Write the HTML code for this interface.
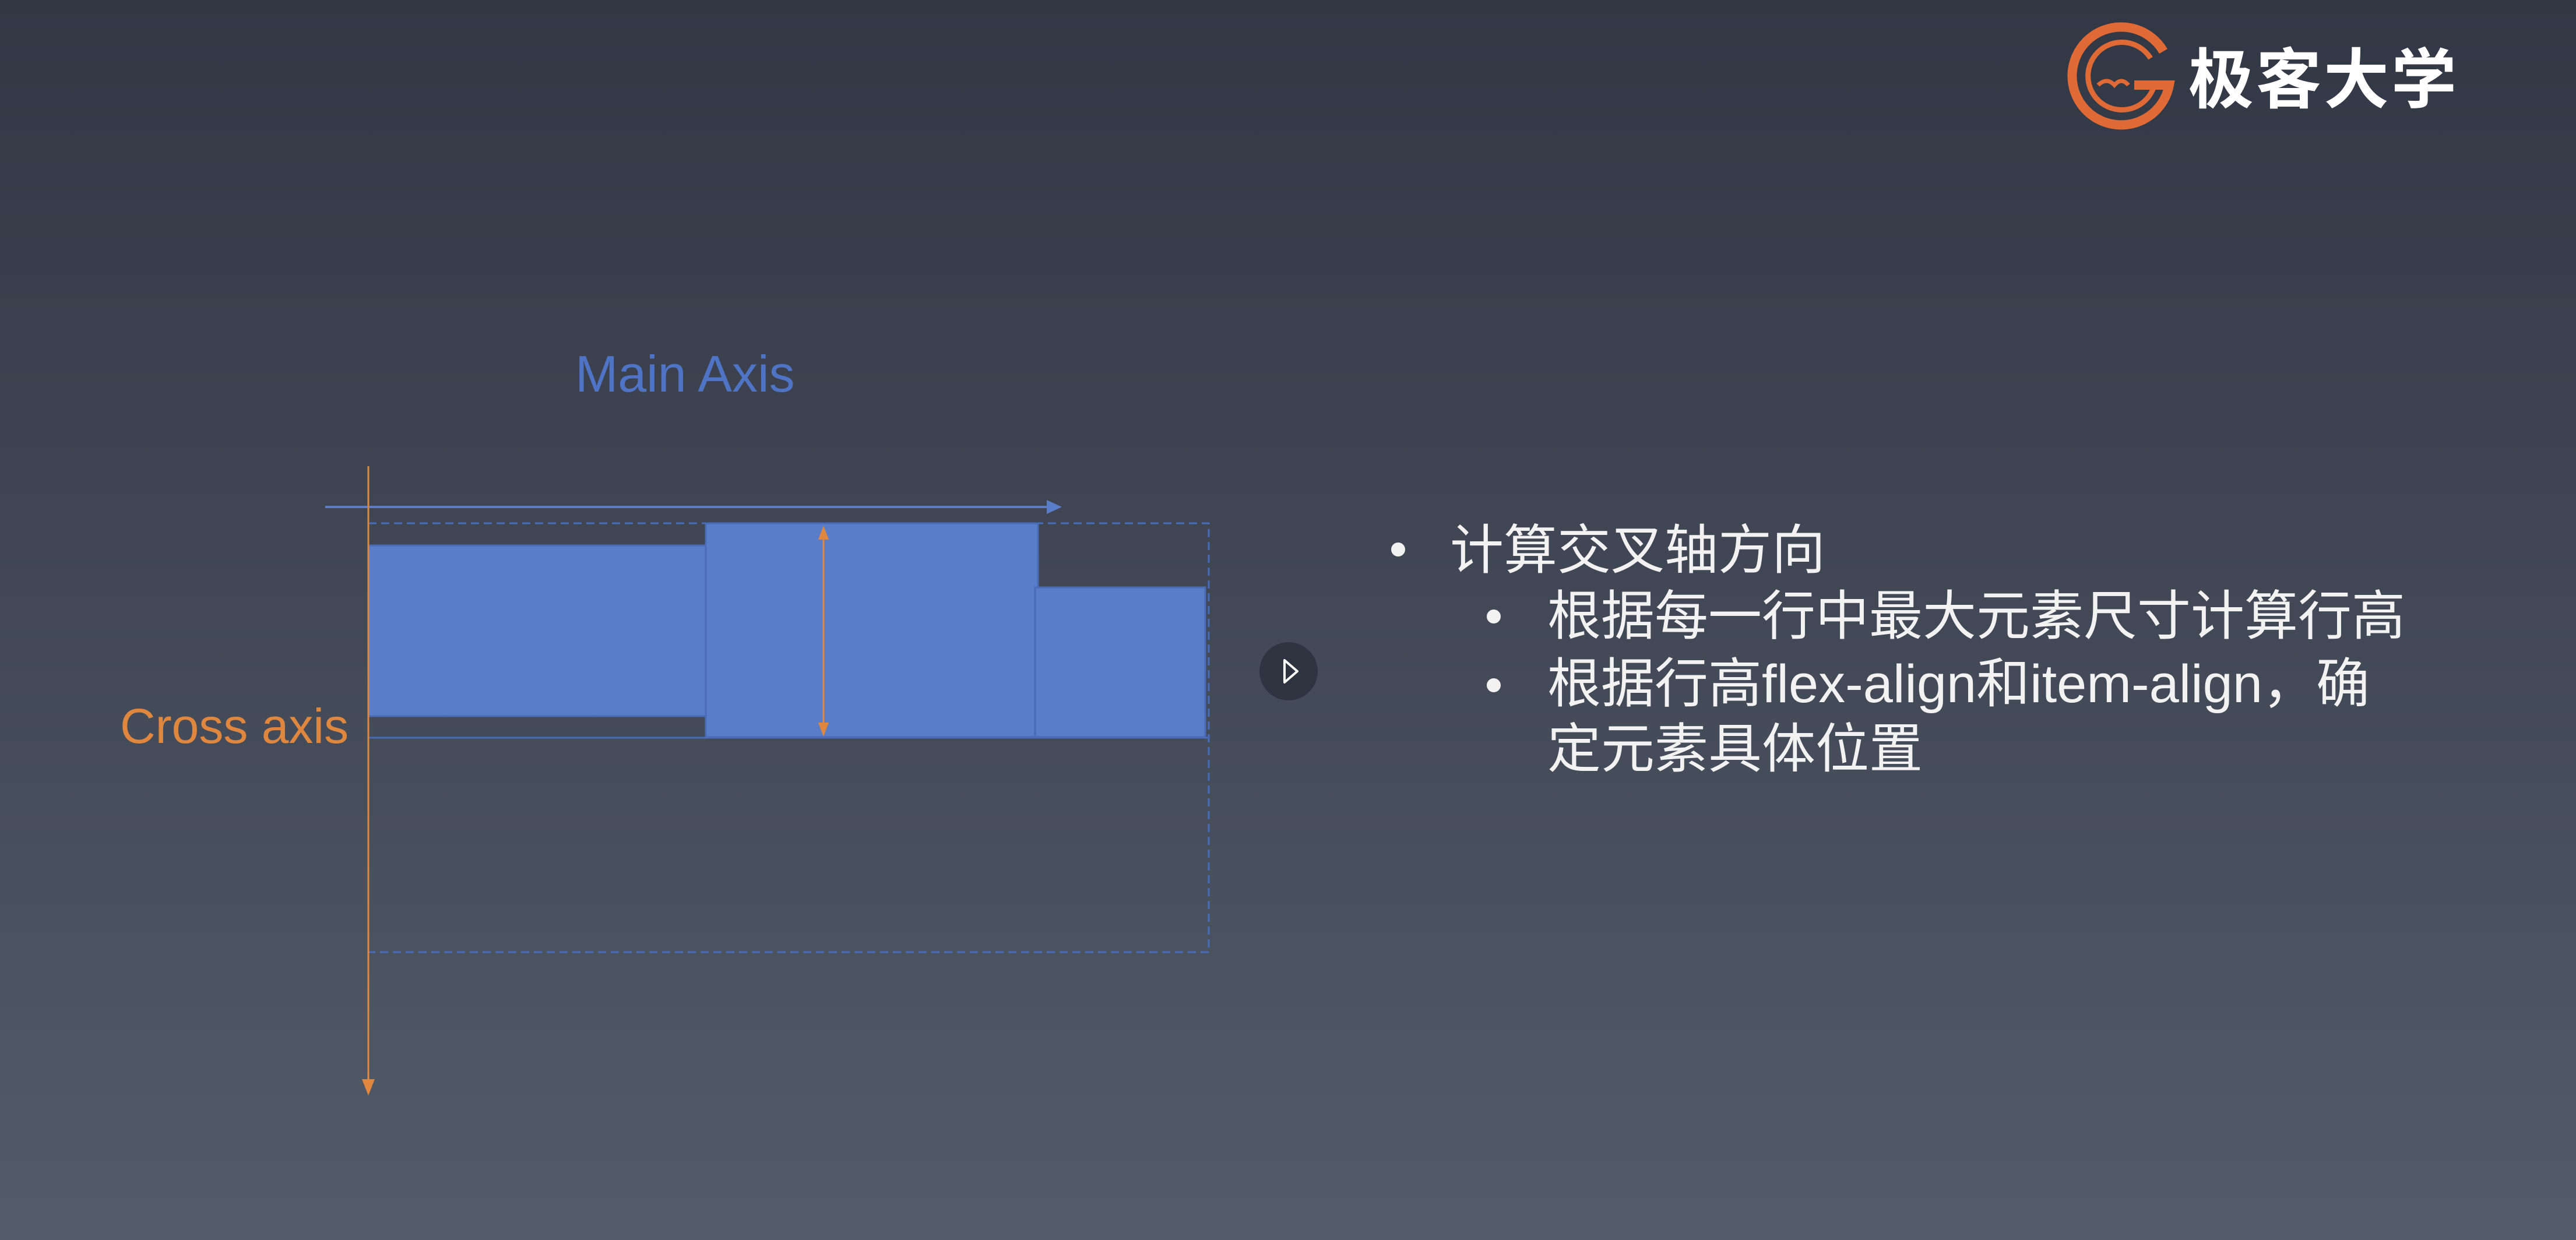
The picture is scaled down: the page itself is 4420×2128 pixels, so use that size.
<!DOCTYPE html>
<html><head><meta charset="utf-8"><style>
html,body{margin:0;padding:0}
body{width:4420px;height:2128px;overflow:hidden;position:relative;
background:linear-gradient(180deg,#323744 0%,#3d4350 35%,#474e5b 65%,#535c6b 100%);
font-family:"Liberation Sans","Noto Sans CJK SC",sans-serif;}
.t{position:absolute;white-space:nowrap;line-height:1}
.w{color:#f2f2f2;font-size:92px}
.dot{position:absolute;width:24px;height:24px;border-radius:50%;background:#f2f2f2}
</style></head><body>
<svg width="4420" height="2128" style="position:absolute;left:0;top:0">
  <rect x="632" y="898" width="1442" height="736" fill="none" stroke="#4a6cb8" stroke-width="3" stroke-dasharray="14 8"/>
  <rect x="632" y="936" width="580" height="293" fill="#5a7dc9" stroke="#4a6cb8" stroke-width="3"/>
  <rect x="1211" y="898" width="570" height="367" fill="#5a7dc9" stroke="#4a6cb8" stroke-width="3"/>
  <rect x="1776" y="1008" width="292" height="257" fill="#5a7dc9" stroke="#4a6cb8" stroke-width="3"/>
  <line x1="632" y1="1266" x2="2074" y2="1266" stroke="#4a6cb8" stroke-width="3"/>
  <line x1="558" y1="870" x2="1800" y2="870" stroke="#5a7dc9" stroke-width="4"/>
  <polygon points="1796,858 1822,870 1796,882" fill="#5a7dc9"/>
  <line x1="632" y1="800" x2="632" y2="1860" stroke="#e0873f" stroke-width="3"/>
  <polygon points="621,1852 643,1852 632,1880" fill="#e0873f"/>
  <line x1="1413" y1="910" x2="1413" y2="1255" stroke="#e0873f" stroke-width="3"/>
  <polygon points="1404,926 1422,926 1413,902" fill="#e0873f"/>
  <polygon points="1404,1240 1422,1240 1413,1264" fill="#e0873f"/>
  <ellipse cx="2211" cy="1152" rx="50" ry="50" fill="#2e3440"/>
  <polygon points="2204,1133 2226,1152 2204,1171" fill="none" stroke="#fff" stroke-width="4" stroke-linejoin="round"/>
  <g fill="none" stroke="#e06a35">
    <path d="M3712,88 A84,84 0 1 0 3722,146 L3662,146" stroke-width="16"/>
    <path d="M3690,100 A58,58 0 1 0 3696,148" stroke-width="9"/>
    <path d="M3600,146 Q3615,132 3628,146 Q3640,132 3652,146" stroke-width="7"/>
  </g>
</svg>
<div class="t" style="left:3755px;top:82px;font-size:112px;font-weight:bold;color:#fff;letter-spacing:4px">极客大学</div>
<div class="t" style="left:987px;top:598px;font-size:88px;color:#4f74c6">Main Axis</div>
<div class="t" style="left:206px;top:1204px;font-size:84px;color:#e0873f">Cross axis</div>
<div class="dot" style="left:2387px;top:931px"></div>
<div class="t w" style="left:2488px;top:899px">计算交叉轴方向</div>
<div class="dot" style="left:2551px;top:1046px"></div>
<div class="t w" style="left:2655px;top:1012px">根据每一行中最大元素尺寸计算行高</div>
<div class="dot" style="left:2551px;top:1164px"></div>
<div class="t w" style="left:2655px;top:1128px">根据行高flex-align和item-align，确</div>
<div class="t w" style="left:2655px;top:1240px">定元素具体位置</div>
</body></html>
